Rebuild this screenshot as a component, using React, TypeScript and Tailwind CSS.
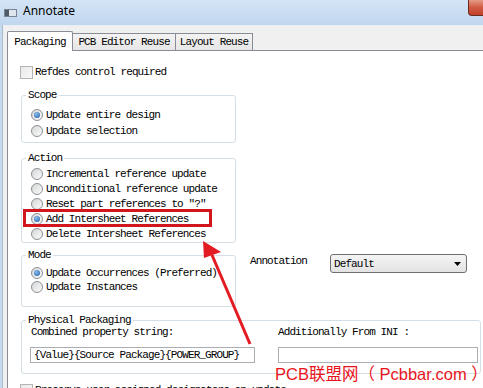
import type { ReactNode } from "react";

const mono = "font-['Liberation_Mono',monospace] text-[11px] tracking-[-0.9px] leading-[12px] text-black";

function Radio({ checked }: { checked?: boolean }) {
  return (
    <span className="flex h-[12px] w-[12px] shrink-0 items-center justify-center rounded-full border border-[#8c8f94] bg-linear-to-br from-[#d6d7d8] to-[#fbfbfb]">
      {checked && (
        <span className="h-[6px] w-[6px] rounded-full bg-[radial-gradient(circle_at_40%_35%,#8cc0ee,#1a56a3)]" />
      )}
    </span>
  );
}

function RadioRow({ label, checked, h = "h-[15px]" }: { label: string; checked?: boolean; h?: string }) {
  return (
    <div className={`flex items-center gap-[3px] ${h}`}>
      <Radio checked={checked} />
      <span className={mono}>{label}</span>
    </div>
  );
}

function Group({ title, className = "", children }: { title: string; className?: string; children: ReactNode }) {
  return (
    <fieldset className={`rounded-[3px] border border-[#d5dfe5] ${className}`}>
      <legend className={`ml-[4px] px-[2px] ${mono}`}>{title}</legend>
      {children}
    </fieldset>
  );
}

function Box() {
  return <span className="h-[13px] w-[13px] shrink-0 border border-[#b4b4b4] bg-linear-to-br from-[#e9e9e9] to-[#f8f8f8]" />;
}

export default function App() {
  return (
    <div className="relative flex h-[388px] w-[483px] flex-col overflow-hidden bg-[#f0f0f0]">
      {/* title bar */}
      <div className="flex h-[25px] shrink-0 items-start bg-linear-to-b from-[#d3e4f6] to-[#c0d7ef]">
        <div className="ml-[4px] mt-[9px] flex h-[8px] w-[13px] border border-[#7a8593] bg-[#dfe6ee]">
          <span className="w-[4px] bg-[#4f5a68]" />
        </div>
        <span className="ml-[6px] mt-[3px] font-['Noto_Sans',sans-serif] text-[12px] leading-[16px] text-black">Annotate</span>
        <div className="ml-auto h-[16px] w-[15px] rounded-bl-[4px] border-b border-l border-[#6b2a20] bg-linear-to-b from-[#e59a86] via-[#d05a42] to-[#c0412c]" />
      </div>

      <div className="flex flex-1">
        <div className="w-[3px] border-r border-[#a9bccf] bg-[#c6d9ee]" />
        <div className="flex flex-1 flex-col pl-[4px]">
          {/* tabs */}
          <div className="flex h-[25px] items-end border-t border-[#e9eef4]">
            <div className={`relative z-10 -mb-px flex h-[20px] w-[66px] items-center justify-center rounded-t-[2px] border border-b-0 border-[#898c95] bg-white ${mono}`}>
              Packaging
            </div>
            <div className={`flex h-[17px] w-[103px] items-center justify-center border border-b-0 border-l-0 border-[#898c95] bg-linear-to-b from-[#f3f3f3] to-[#e6e6e6] ${mono}`}>
              PCB Editor Reuse
            </div>
            <div className={`flex h-[17px] w-[77px] items-center justify-center border border-b-0 border-l-0 border-[#898c95] bg-linear-to-b from-[#f3f3f3] to-[#e6e6e6] ${mono}`}>
              Layout Reuse
            </div>
          </div>

          {/* panel */}
          <div className="flex flex-1 flex-col border-l border-t border-[#898c95] bg-white pl-[12px]">
            <div className="mt-[14px] flex h-[14px] items-center gap-[2px]">
              <Box />
              <span className={`${mono} text-[#8d8d8d]`}>Refdes control required</span>
            </div>

            <Group title="Scope" className="ml-px mt-[10px] w-[215px]">
              <div className="pb-[3px] pl-[9px] pt-[6px]">
                <RadioRow label="Update entire design" checked h="h-[16px]" />
                <RadioRow label="Update selection" h="h-[16px]" />
              </div>
            </Group>

            <Group title="Action" className="ml-px mt-[9px] w-[215px]">
              <div className="pb-px pl-[9px] pt-[2px]">
                <RadioRow label="Incremental reference update" />
                <RadioRow label="Unconditional reference update" />
                <RadioRow label={'Reset part references to "?"'} />
                <div className="relative">
                  <RadioRow label="Add Intersheet References" checked />
                  <span className="absolute -left-[8px] -top-[2px] h-[18px] w-[189px] border-[3px] border-[#d2161e]" />
                </div>
                <RadioRow label="Delete Intersheet References" />
              </div>
            </Group>

            <div className="ml-px mt-[6px] flex items-start">
              <Group title="Mode" className="w-[215px]">
                <div className="pb-[12px] pl-[9px] pt-[5px]">
                  <RadioRow label="Update Occurrences (Preferred)" checked h="h-[14px]" />
                  <RadioRow label="Update Instances" h="h-[14px]" />
                </div>
              </Group>
              <div className="ml-[14px] mt-[5px] flex items-start">
                <span className={`w-[80px] pt-px ${mono}`}>Annotation</span>
                <div className="flex h-[19px] w-[137px] items-center justify-between rounded-[3px] border border-[#707070] bg-linear-to-b from-[#f4f4f4] to-[#e3e3e3] pl-[3px] pr-[5px]">
                  <span className={mono}>Default</span>
                  <svg width="7" height="4" viewBox="0 0 7 4">
                    <path d="M0 0h7L3.5 4z" fill="#000" />
                  </svg>
                </div>
              </div>
            </div>

            <Group title="Physical Packaging" className="ml-px mt-[7px] w-[460px]">
              <div className="flex gap-[23px] pb-[10px] pl-[8px]">
                <div className="flex w-[225px] flex-col">
                  <span className={`pl-px ${mono}`}>Combined property string:</span>
                  <div className={`mt-[9px] flex h-[16px] items-center border border-[#abadb3] bg-white px-[3px] ${mono} text-[#6f6f6f]`}>
                    {"{Value}{Source Package}{POWER_GROUP}"}
                  </div>
                </div>
                <div className="flex w-[200px] flex-col">
                  <span className={mono}>Additionally From INI :</span>
                  <div className="mt-[9px] h-[16px] border border-[#abadb3] bg-white" />
                </div>
              </div>
            </Group>

            <div className="mt-[9px] flex h-[14px] items-center gap-[2px]">
              <Box />
              <span className={mono}>Preserve user assigned designators on update</span>
            </div>
          </div>
        </div>
      </div>

      {/* annotation arrow */}
      <svg className="pointer-events-none absolute inset-0" width="483" height="388" viewBox="0 0 483 388">
        <line x1="250" y1="344" x2="212" y2="255" stroke="#e31b23" strokeWidth="3" />
        <polygon points="203,241 204,258 221,252" fill="#e31b23" />
      </svg>

      <span className="pointer-events-none absolute left-[275px] top-[363px] whitespace-nowrap font-['Liberation_Sans','Noto_Sans_CJK_SC',sans-serif] text-[16.5px] leading-[22px] text-[#e8141c]">
        PCB联盟网（ Pcbbar.com ）
      </span>
    </div>
  );
}
